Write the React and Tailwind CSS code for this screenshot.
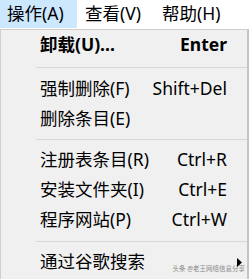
export default function App() {
  const font = { fontFamily: '"Noto Sans", "Noto Sans CJK SC", sans-serif' };
  const Row = ({ label, shortcut, bold }) => (
    <div className={`flex h-[30px] items-center pl-[39px] pr-[20px] text-[17.5px] leading-none text-black ${bold ? 'font-bold' : ''}`}>
      <span className="flex-1 whitespace-nowrap">{label}</span>
      {shortcut && <span className="whitespace-nowrap">{shortcut}</span>}
    </div>
  );
  const Sep = ({ h, top }) => (
    <div className={`${h} ${top} pl-[35px]`}>
      <div className="border-t border-[#d7d7d7]" />
    </div>
  );
  return (
    <div className="relative h-[279px] w-[250px] overflow-hidden bg-white" style={font}>
      <div className="flex h-[28px] text-[17.5px] leading-none text-black">
        <div className="flex w-[77px] items-center bg-[#cce8ff] px-[7px]">操作(A)</div>
        <div className="flex w-[77px] items-center px-[8px]">查看(V)</div>
        <div className="flex items-center px-[8px]">帮助(H)</div>
      </div>
      <div className="mt-px h-[260px] w-[249px] border border-r-2 border-[#cfcfcf] border-r-[#c4c4c4] bg-[#f0f0f0]">
        <Row label="卸载(U)..." shortcut="Enter" bold />
        <Sep h="h-[14px]" top="pt-[7px]" />
        <Row label="强制删除(F)" shortcut="Shift+Del" />
        <Row label="删除条目(E)" />
        <Sep h="h-[11px]" top="pt-[5px]" />
        <Row label="注册表条目(R)" shortcut="Ctrl+R" />
        <Row label="安装文件夹(I)" shortcut="Ctrl+E" />
        <Row label="程序网站(P)" shortcut="Ctrl+W" />
        <Sep h="h-[12px]" top="pt-[6px]" />
        <div className="relative flex h-[30px] items-center pl-[39px] text-[17.5px] leading-none text-black">
          <span>通过谷歌搜索</span>
          <svg className="absolute left-[236px] top-[11px]" width="5" height="9" viewBox="0 0 5 9">
            <path d="M0 0 L5 4.5 L0 9 Z" fill="#000" />
          </svg>
        </div>
      </div>
      <div className="absolute right-[5px] top-[266px] whitespace-nowrap text-[6.5px] leading-none text-[#8a8a8a]">
        头条 @老王网络信息分享
      </div>
    </div>
  );
}
